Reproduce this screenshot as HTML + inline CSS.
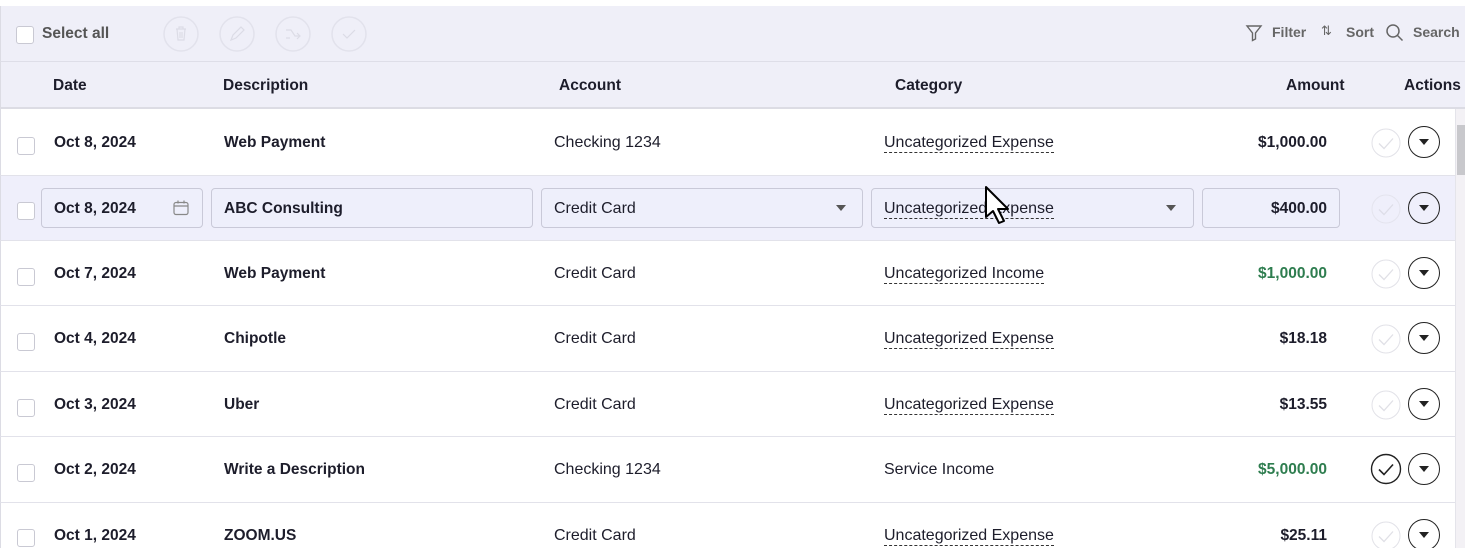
<!DOCTYPE html>
<html><head><style>
*{box-sizing:border-box;margin:0;padding:0}
html,body{width:1465px;height:548px;overflow:hidden}
body{background:#fff;font-family:"Liberation Sans",sans-serif;color:#1d1d2b;position:relative}
.a{position:absolute}
.tb{left:0;top:6px;width:1465px;height:55px;background:#efeff8;border-left:1px solid #dcdce4}
.hd{left:0;top:61px;width:1465px;height:48px;background:#efeff8;border-top:1px solid #dedee8;border-bottom:2px solid #dcdce4;border-left:1px solid #dcdce4}
.hd span{position:absolute;top:15px;font-weight:bold;font-size:15.5px;color:#1d1d2b}
.row{left:0;width:1455px;border-bottom:1px solid #e2e2ea;border-left:1px solid #dcdce4}
.cb{position:absolute;left:16px;width:18px;height:18px;border:1px solid #c9c9d3;border-radius:3px;background:#fff}
.t{position:absolute;font-size:16px;white-space:nowrap}
.b{font-weight:bold;font-size:15.5px}
.u{border-bottom:1px dashed #333;padding-bottom:1px}
.g{color:#2e7d4f}
.ck{position:absolute;left:1370px}
.dd{position:absolute;left:1407px;width:32px;height:32px;border:1.5px solid #222;border-radius:50%}
.dd:after{content:"";position:absolute;left:10px;top:12px;border-left:5px solid transparent;border-right:5px solid transparent;border-top:6px solid #222}
.in{position:absolute;top:12px;height:40px;border:1px solid #c9c9d8;border-radius:4px;background:#eeeffb}
.tc{position:absolute;top:10px}
</style></head><body>
<div class="a tb">
 <div class="cb" style="top:20px;left:15px"></div>
 <div class="t" style="left:41px;top:19px;color:#555;font-weight:bold;font-size:15.5px">Select all</div>
 <svg class="tc" style="left:162px" width="36" height="36" viewBox="0 0 36 36"><circle cx="18" cy="18" r="17" fill="none" stroke="#e2e2ec" stroke-width="1.5"/><path d="M13 13h10M16 13v-2h4v2M14 13l1 11h6l1-11M17 16v6M19 16v6" fill="none" stroke="#dcdce6" stroke-width="1.2"/></svg>
 <svg class="tc" style="left:218px" width="36" height="36" viewBox="0 0 36 36"><circle cx="18" cy="18" r="17" fill="none" stroke="#e2e2ec" stroke-width="1.5"/><path d="M12 24l2-5 8-8 3 3-8 8z" fill="none" stroke="#dcdce6" stroke-width="1.2"/></svg>
 <svg class="tc" style="left:274px" width="36" height="36" viewBox="0 0 36 36"><circle cx="18" cy="18" r="17" fill="none" stroke="#e2e2ec" stroke-width="1.5"/><path d="M11 14h5l4 6h5M22 17l3 3-3 3M11 22h4" fill="none" stroke="#dcdce6" stroke-width="1.2"/></svg>
 <svg class="tc" style="left:330px" width="36" height="36" viewBox="0 0 36 36"><circle cx="18" cy="18" r="17" fill="none" stroke="#e2e2ec" stroke-width="1.5"/><path d="M12 18l4 4 8-8" fill="none" stroke="#dcdce6" stroke-width="1.2"/></svg>
 <svg class="a" style="left:1244px;top:18px" width="18" height="18" viewBox="0 0 18 18"><path d="M2 2h14l-5.5 7v6l-3 1.5V9z" fill="none" stroke="#666" stroke-width="1.4"/></svg>
 <div class="t b" style="left:1271px;top:18px;color:#666;font-size:14px">Filter</div>
 <div class="t" style="left:1320px;top:17px;color:#666;font-size:13px">⇅</div>
 <div class="t b" style="left:1345px;top:18px;color:#666;font-size:14px">Sort</div>
 <svg class="a" style="left:1384px;top:17px" width="20" height="20" viewBox="0 0 20 20"><circle cx="8" cy="8" r="6" fill="none" stroke="#666" stroke-width="1.5"/><path d="M12.5 12.5l5 5" stroke="#666" stroke-width="1.5"/></svg>
 <div class="t b" style="left:1412px;top:18px;color:#666;font-size:14px">Search</div>
</div>
<div class="a hd">
 <span style="left:52px">Date</span><span style="left:222px">Description</span><span style="left:558px">Account</span><span style="left:894px">Category</span><span style="left:1285px">Amount</span><span style="left:1403px">Actions</span>
</div>

<div class="a row" style="top:109px;height:67px">
 <div class="cb" style="top:28px"></div><div class="t b" style="left:53px;top:25px">Oct 8, 2024</div><div class="t b" style="left:223px;top:25px">Web Payment</div><div class="t" style="left:553px;top:25px">Checking 1234</div><div class="t" style="left:883px;top:25px"><span class="u">Uncategorized Expense</span></div><div class="t b" style="right:128px;top:25px">$1,000.00</div><svg class="ck" style="top:19px" width="30" height="30" viewBox="0 0 30 30"><circle cx="15" cy="15" r="14" fill="none" stroke="#e2e2e8"/><path d="M8 15.5l5 5 9-10" fill="none" stroke="#e0e0e6" stroke-width="1.3"/></svg><div class="dd" style="top:17px"></div>
</div>
<div class="a row" style="top:176px;height:65px;background:#efeffb">
 <div class="cb" style="top:26px"></div>
 <div class="in" style="left:40px;width:162px"></div><div class="t b" style="left:53px;top:24px">Oct 8, 2024</div>
 <svg class="a" style="left:171px;top:23px" width="18" height="18" viewBox="0 0 18 18"><rect x="2" y="3.5" width="14" height="12" rx="2" fill="none" stroke="#888" stroke-width="1.2"/><path d="M2 7h14M6 1.5v3M12 1.5v3" stroke="#888" stroke-width="1.2"/></svg>
 <div class="in" style="left:210px;width:322px"></div><div class="t b" style="left:223px;top:24px">ABC Consulting</div>
 <div class="in" style="left:540px;width:322px"></div><div class="t" style="left:553px;top:24px">Credit Card</div><div class="a" style="left:835px;top:29px;border-left:5px solid transparent;border-right:5px solid transparent;border-top:6px solid #555"></div>
 <div class="in" style="left:870px;width:323px"></div><div class="t" style="left:883px;top:24px"><span class="u">Uncategorized Expense</span></div><div class="a" style="left:1165px;top:29px;border-left:5px solid transparent;border-right:5px solid transparent;border-top:6px solid #555"></div>
 <div class="in" style="left:1201px;width:138px"></div><div class="t b" style="right:128px;top:24px">$400.00</div>
 <svg class="ck" style="top:18px" width="30" height="30" viewBox="0 0 30 30"><circle cx="15" cy="15" r="14" fill="none" stroke="#e4e4ee"/><path d="M8 15.5l5 5 9-10" fill="none" stroke="#dedee8" stroke-width="1.3"/></svg><div class="dd" style="top:16px"></div>
</div>
<div class="a row" style="top:241px;height:65px">
 <div class="cb" style="top:27px"></div><div class="t b" style="left:53px;top:24px">Oct 7, 2024</div><div class="t b" style="left:223px;top:24px">Web Payment</div><div class="t" style="left:553px;top:24px">Credit Card</div><div class="t" style="left:883px;top:24px"><span class="u">Uncategorized Income</span></div><div class="t b g" style="right:128px;top:24px">$1,000.00</div><svg class="ck" style="top:18px" width="30" height="30" viewBox="0 0 30 30"><circle cx="15" cy="15" r="14" fill="none" stroke="#e2e2e8"/><path d="M8 15.5l5 5 9-10" fill="none" stroke="#e0e0e6" stroke-width="1.3"/></svg><div class="dd" style="top:16px"></div>
</div>
<div class="a row" style="top:306px;height:66px">
 <div class="cb" style="top:27px"></div><div class="t b" style="left:53px;top:24px">Oct 4, 2024</div><div class="t b" style="left:223px;top:24px">Chipotle</div><div class="t" style="left:553px;top:24px">Credit Card</div><div class="t" style="left:883px;top:24px"><span class="u">Uncategorized Expense</span></div><div class="t b" style="right:128px;top:24px">$18.18</div><svg class="ck" style="top:18px" width="30" height="30" viewBox="0 0 30 30"><circle cx="15" cy="15" r="14" fill="none" stroke="#e2e2e8"/><path d="M8 15.5l5 5 9-10" fill="none" stroke="#e0e0e6" stroke-width="1.3"/></svg><div class="dd" style="top:16px"></div>
</div>
<div class="a row" style="top:372px;height:65px">
 <div class="cb" style="top:27px"></div><div class="t b" style="left:53px;top:24px">Oct 3, 2024</div><div class="t b" style="left:223px;top:24px">Uber</div><div class="t" style="left:553px;top:24px">Credit Card</div><div class="t" style="left:883px;top:24px"><span class="u">Uncategorized Expense</span></div><div class="t b" style="right:128px;top:24px">$13.55</div><svg class="ck" style="top:18px" width="30" height="30" viewBox="0 0 30 30"><circle cx="15" cy="15" r="14" fill="none" stroke="#e2e2e8"/><path d="M8 15.5l5 5 9-10" fill="none" stroke="#e0e0e6" stroke-width="1.3"/></svg><div class="dd" style="top:16px"></div>
</div>
<div class="a row" style="top:437px;height:66px">
 <div class="cb" style="top:27px"></div><div class="t b" style="left:53px;top:24px">Oct 2, 2024</div><div class="t b" style="left:223px;top:24px">Write a Description</div><div class="t" style="left:553px;top:24px">Checking 1234</div><div class="t" style="left:883px;top:24px">Service Income</div><div class="t b g" style="right:128px;top:24px">$5,000.00</div>
 <svg class="a" style="left:1369px;top:16px" width="32" height="32" viewBox="0 0 32 32"><circle cx="16" cy="16" r="14.5" fill="none" stroke="#222" stroke-width="1.4"/><path d="M9 16.5l5 5 9-10" fill="none" stroke="#222" stroke-width="1.6"/></svg>
 <div class="dd" style="top:16px"></div>
</div>
<div class="a row" style="top:503px;height:60px;border-bottom:none">
 <div class="cb" style="top:26px"></div><div class="t b" style="left:53px;top:24px">Oct 1, 2024</div><div class="t b" style="left:223px;top:24px">ZOOM.US</div><div class="t" style="left:553px;top:24px">Credit Card</div><div class="t" style="left:883px;top:24px"><span class="u">Uncategorized Expense</span></div><div class="t b" style="right:128px;top:24px">$25.11</div><svg class="ck" style="top:18px" width="30" height="30" viewBox="0 0 30 30"><circle cx="15" cy="15" r="14" fill="none" stroke="#e2e2e8"/><path d="M8 15.5l5 5 9-10" fill="none" stroke="#e0e0e6" stroke-width="1.3"/></svg><div class="dd" style="top:16px"></div>
</div>
<div class="a" style="left:1455px;top:109px;width:10px;height:439px;background:#f3f1f5;border-left:1px solid #e4e4ea"></div>
<div class="a" style="left:1457px;top:125px;width:8px;height:50px;background:#c8c8cc"></div>
<svg class="a" style="left:983px;top:185px" width="32" height="44" viewBox="0 0 32 44"><path d="M3 2v30l7-6 6 12 5-2-6-12h10z" fill="#fff" stroke="#000" stroke-width="2" stroke-linejoin="round"/></svg>
</body></html>
